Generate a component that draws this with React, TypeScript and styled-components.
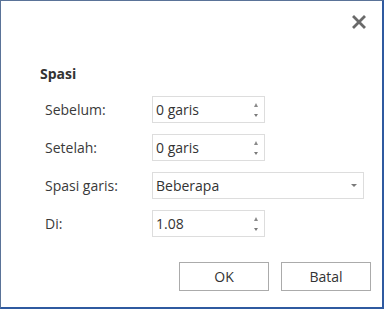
import React from "react";
import styled, { createGlobalStyle } from "styled-components";

const GlobalStyle = createGlobalStyle`
  html, body {
    margin: 0;
    padding: 0;
    background: #ffffff;
  }
  body {
    font-family: "Open Sans", "Noto Sans", Arial, sans-serif;
    color: #333333;
  }
`;

const Dialog = styled.div`
  box-sizing: border-box;
  width: 384px;
  height: 309px;
  background: #ffffff;
  border-left: 1px solid #5a7398;
  border-top: 1px solid #5a7398;
  border-right: 2px solid #2f5aa0;
  border-bottom: 2px solid #2f5aa0;
  display: flex;
  flex-direction: column;
`;

const Header = styled.div`
  display: flex;
  justify-content: flex-end;
  padding: 14px 16px 0 0;
  height: 14px;
`;

const CloseButton = styled.button`
  width: 14px;
  height: 14px;
  padding: 0;
  border: none;
  background: transparent;
  display: flex;
  align-items: center;
  justify-content: center;
  cursor: pointer;
`;

const Body = styled.div`
  padding-left: 39px;
`;

const Title = styled.div`
  margin-top: 35px;
  font-size: 14px;
  line-height: 19px;
  font-weight: 700;
  color: #333333;
`;

const Form = styled.div`
  margin-top: 13px;
  margin-left: 5px;
  display: grid;
  grid-template-columns: 107px auto;
  row-gap: 11px;
  align-items: center;
`;

const Label = styled.label`
  font-size: 14px;
  color: #3a3a3a;
  line-height: 27px;
`;

const Field = styled.div<{ $width: number }>`
  box-sizing: border-box;
  width: ${(p) => p.$width}px;
  height: 27px;
  border: 1px solid #dddddd;
  display: flex;
  align-items: center;
  justify-content: space-between;
  padding: 0 6px 0 3px;
  font-size: 14px;
  color: #333333;
`;

const Spinner = styled.div`
  display: flex;
  flex-direction: column;
  align-items: center;
  gap: 7px;
  margin-top: 1px;
`;

const Arrow = styled.span<{ $dir: "up" | "down"; $w?: number }>`
  width: 0;
  height: 0;
  border-left: ${(p) => (p.$w ?? 5) / 2}px solid transparent;
  border-right: ${(p) => (p.$w ?? 5) / 2}px solid transparent;
  ${(p) =>
    p.$dir === "up"
      ? `border-bottom: 4px solid #8a8a8a;`
      : `border-top: 3px solid #7a7a7a;`}
`;

const Footer = styled.div`
  margin-top: 25px;
  display: flex;
  justify-content: flex-end;
  gap: 12px;
  padding-right: 11px;
`;

const Button = styled.button`
  box-sizing: border-box;
  width: 90px;
  height: 29px;
  background: #ffffff;
  border: 1px solid #ababab;
  font-family: inherit;
  font-size: 14px;
  color: #333333;
  padding: 0;
  cursor: pointer;
`;

const CloseIcon = () => (
  <svg width="14" height="14" viewBox="0 0 14 14">
    <path
      d="M2 2 L12 12 M12 2 L2 12"
      stroke="#6a6a6a"
      strokeWidth="2.8"
      strokeLinecap="square"
    />
  </svg>
);

const SpinField = ({ value }: { value: string }) => (
  <Field $width={113}>
    <span>{value}</span>
    <Spinner>
      <Arrow $dir="up" />
      <Arrow $dir="down" />
    </Spinner>
  </Field>
);

export default function App() {
  return (
    <>
      <GlobalStyle />
      <Dialog>
        <Header>
          <CloseButton aria-label="Tutup">
            <CloseIcon />
          </CloseButton>
        </Header>
        <Body>
          <Title>Spasi</Title>
          <Form>
            <Label>Sebelum:</Label>
            <SpinField value="0 garis" />
            <Label>Setelah:</Label>
            <SpinField value="0 garis" />
            <Label>Spasi garis:</Label>
            <Field $width={212}>
              <span>Beberapa</span>
              <Arrow $dir="down" $w={7} />
            </Field>
            <Label>Di:</Label>
            <SpinField value="1.08" />
          </Form>
        </Body>
        <Footer>
          <Button>OK</Button>
          <Button>Batal</Button>
        </Footer>
      </Dialog>
    </>
  );
}
